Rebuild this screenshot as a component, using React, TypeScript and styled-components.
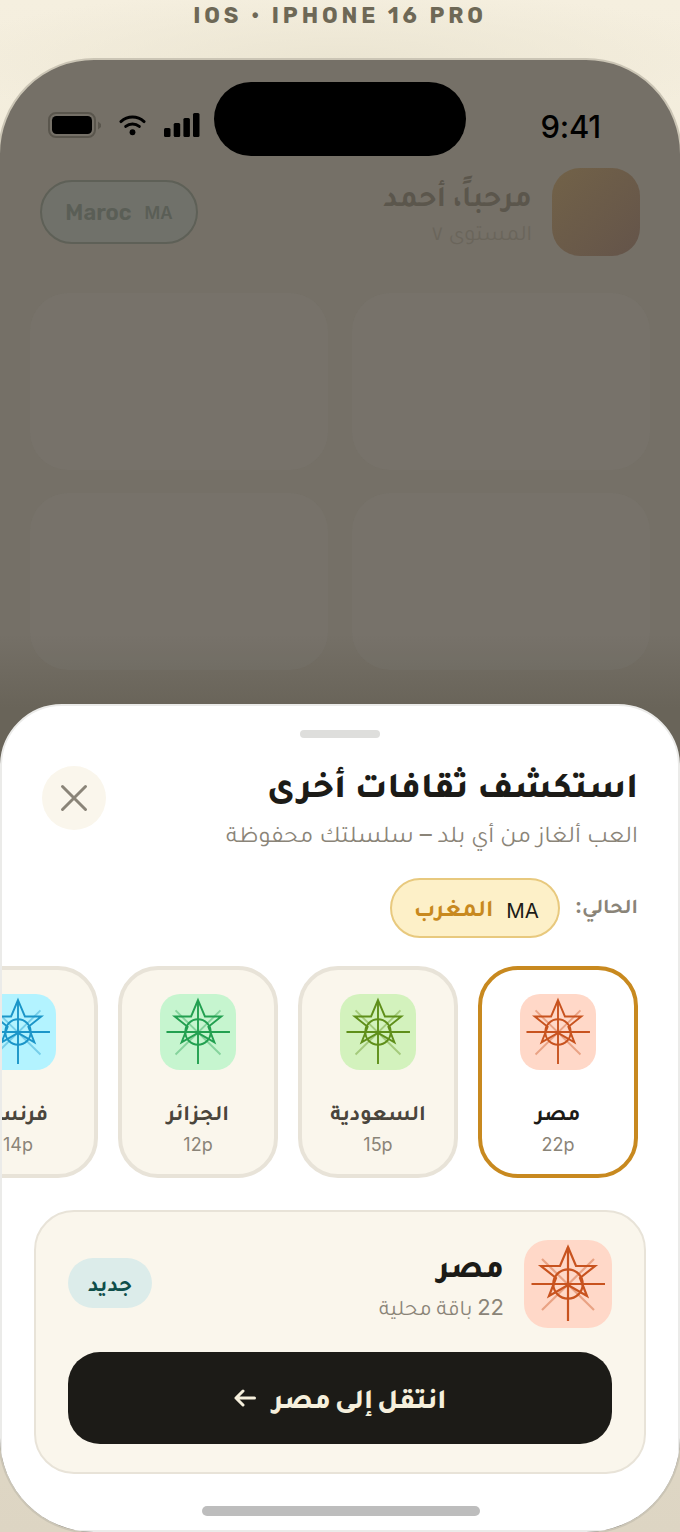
import React from "react";
import styled, { createGlobalStyle } from "styled-components";

const arabic = `Inter, Tajawal, "Noto Kufi Arabic", "DejaVu Sans", sans-serif`;

const Global = createGlobalStyle`
  html, body { margin: 0; padding: 0; height: 1532px; overflow: hidden; }
  * { box-sizing: border-box; }
  body { font-family: ${arabic}; }
`;

const Page = styled.div`
  width: 680px;
  height: 1532px;
  overflow: hidden;
  display: flex;
  flex-direction: column;
  background:
    radial-gradient(ellipse 60% 70px at 50% 60px, #ebe5d2 0%, rgba(235, 229, 210, 0) 100%),
    linear-gradient(180deg, #f5efdf 0%, #ebe4d0 50%, #ddd5c3 100%);
`;
const DeviceLabel = styled.div`
  flex: none;
  height: 58px;
  padding-top: 3px;
  text-align: center;
  font: 700 22px/26px Rubik, Roboto, sans-serif;
  letter-spacing: 3.9px;
  color: #6e6856;
`;
const Phone = styled.div`
  position: relative;
  flex: none;
  width: 684px;
  height: 1476px;
  margin-left: -2px;
  overflow: hidden;
  border: 2px solid #cbc5b5;
  border-radius: 96px;
  background: linear-gradient(180deg, #757067 0%, #757067 39%, #696459 44%, #696459 100%);
`;
const Island = styled.div`
  position: absolute;
  top: 22px;
  left: 214px;
  width: 252px;
  height: 74px;
  border-radius: 37px;
  background: #000;
`;
const StatusBar = styled.div`
  height: 108px;
  padding: 52px 79px 0 48px;
  display: flex;
  align-items: flex-start;
  justify-content: space-between;
`;
const StatusIcons = styled.div`
  display: flex;
  align-items: center;
  gap: 18px;
`;
const Clock = styled.div`
  font: 500 31px/30px Inter, sans-serif;
  color: #000;
  letter-spacing: -0.2px;
`;
const Header = styled.div`
  display: flex;
  align-items: center;
  justify-content: space-between;
  padding: 0 40px;
  height: 88px;
`;
const CountryChip = styled.div`
  width: 158px;
  height: 64px;
  padding-top: 2px;
  border: 2px solid #5e6057;
  border-radius: 32px;
  display: flex;
  align-items: center;
  justify-content: center;
  gap: 13px;
  background: #70716a;
  color: #5a5e56;
  font: 600 22px/24px Rubik, sans-serif;
`;
const ChipCode = styled.span`
  font: 600 17px/24px Inter, sans-serif;
`;
const User = styled.div`
  display: flex;
  align-items: center;
  gap: 20px;
`;
const UserText = styled.div`
  direction: rtl;
  display: flex;
  flex-direction: column;
  gap: 4px;
  padding-bottom: 2px;
`;
const Greeting = styled.div`
  font: 700 30px/38px ${arabic};
  color: #5b564c;
`;
const Level = styled.div`
  font: 400 22px/28px ${arabic};
  color: #6a655b;
`;
const Avatar = styled.div`
  width: 88px;
  height: 88px;
  border-radius: 28px;
  background: linear-gradient(135deg, #726248, #64544a);
`;
const Tiles = styled.div`
  display: grid;
  grid-template-columns: 298px 298px;
  grid-auto-rows: 177px;
  gap: 23px 24px;
  padding: 37px 30px 0;
`;
const Tile = styled.div`
  border-radius: 38px;
  background: rgba(140, 140, 135, 0.1);
`;
const Sheet = styled.div`
  position: absolute;
  left: 0;
  right: 0;
  bottom: 0;
  height: 828px;
  border: 2px solid #ebebe9;
  border-radius: 62px 62px 0 0;
  background: #fff;
  direction: rtl;
  display: flex;
  flex-direction: column;
  overflow: hidden;
`;
const Handle = styled.div`
  width: 80px;
  height: 8px;
  flex: none;
  margin: 24px auto 0;
  border-radius: 4px;
  background: #dededc;
`;
const SheetHead = styled.div`
  display: flex;
  justify-content: space-between;
  align-items: flex-start;
  padding: 28px 40px 0;
`;
const Title = styled.h2`
  margin: 0;
  font: 800 36px/36px ${arabic};
  word-spacing: 1px;
  color: #1c1b17;
`;
const Sub = styled.p`
  margin: 16px 0 0;
  font: 400 24px/32px ${arabic};
  word-spacing: -0.7px;
  color: #8a8478;
`;
const CloseBtn = styled.button`
  width: 64px;
  height: 64px;
  border: 0;
  padding: 0;
  border-radius: 50%;
  background: #faf6ec;
  color: #8a8478;
  display: flex;
  align-items: center;
  justify-content: center;
`;
const CurrentRow = styled.div`
  display: flex;
  align-items: center;
  gap: 15px;
  padding: 28px 40px 0;
`;
const CurrentLabel = styled.span`
  padding-bottom: 4px;
  font: 700 21px/24px ${arabic};
  color: #8a8478;
`;
const CurrentPill = styled.div`
  height: 60px;
  padding: 0 19px 0 22px;
  border: 2px solid #e8c97e;
  border-radius: 30px;
  background: #fdf0c8;
  display: flex;
  align-items: center;
  gap: 13px;
`;
const PillCode = styled.span`
  margin-top: 6px;
  font: 400 20.5px/24px Inter, sans-serif;
  color: #1c1b17;
`;
const PillName = styled.span`
  font: 700 24px/30px ${arabic};
  color: #c8891f;
`;
const Scroller = styled.div`
  display: flex;
  gap: 20px;
  padding: 28px 40px 0;
  overflow: hidden;
`;
const Card = styled.div<{ $active?: boolean }>`
  flex: none;
  width: 160px;
  height: 212px;
  border: 4px solid ${(p) => (p.$active ? "#c8891f" : "#e8e3d8")};
  border-radius: 40px;
  background: ${(p) => (p.$active ? "#fff" : "#faf6ec")};
  display: flex;
  flex-direction: column;
  align-items: center;
  padding-top: 24px;
`;
const IconTile = styled.div<{ $bg: string; $size: number }>`
  flex: none;
  width: ${(p) => p.$size}px;
  height: ${(p) => p.$size}px;
  border-radius: ${(p) => (p.$size > 80 ? 24 : 20)}px;
  background: ${(p) => p.$bg};
  display: flex;
`;
const CardName = styled.div<{ $active?: boolean }>`
  margin-top: 27px;
  font: 700 22px/30px ${arabic};
  white-space: nowrap;
  color: ${(p) => (p.$active ? "#1c1b17" : "#4a453c")};
`;
const CardCount = styled.div`
  margin-top: 7px;
  direction: ltr;
  font: 400 18px/22px Inter, sans-serif;
  color: #8a8478;
`;
const Detail = styled.div`
  margin: 32px 32px 0;
  height: 264px;
  border: 2px solid #e8e3d8;
  border-radius: 40px;
  background: #faf6ec;
  padding: 28px 32px 0;
`;
const DetailTop = styled.div`
  display: flex;
  align-items: center;
  gap: 20px;
`;
const DetailText = styled.div`
  flex: 1;
  display: flex;
  flex-direction: column;
  gap: 6px;
`;
const DetailName = styled.div`
  font: 800 32px/40px ${arabic};
  color: #1c1b17;
`;
const DetailCount = styled.div`
  font: 400 22px/30px ${arabic};
  word-spacing: -1.5px;
  color: #8a8478;
`;
const Badge = styled.span`
  width: 84px;
  height: 50px;
  margin-top: -2px;
  border-radius: 25px;
  background: #dcecea;
  color: #0f4f4a;
  display: flex;
  align-items: center;
  justify-content: center;
  font: 700 22px/28px ${arabic};
`;
const GoBtn = styled.button`
  width: 100%;
  height: 92px;
  margin-top: 24px;
  border: 0;
  border-radius: 32px;
  background: #1c1b17;
  color: #f5efdc;
  font: 800 28px/32px ${arabic};
  word-spacing: -2px;
  direction: rtl;
  display: flex;
  align-items: center;
  justify-content: center;
  gap: 17px;
`;
const HomeBar = styled.div`
  position: absolute;
  left: 200px;
  bottom: 14px;
  width: 278px;
  height: 10px;
  border-radius: 5px;
  background: #bdbdbd;
`;

const Star = ({ color, size }: { color: string; size: number }) => (
  <svg width={size} height={size} viewBox="0 0 88 88" fill="none" stroke={color} strokeWidth="2.2">
    <path d="M18 19 70 70M70 19 18 70" opacity=".4" />
    <path d="M44 7 52 26H71L56 38 63 56 44 45 25 56 32 38 17 26H36Z" />
    <circle cx="44" cy="44" r="14.7" />
    <path d="M7.5 44H81M44 7V81" />
  </svg>
);

const countries = [
  { name: "مصر", count: "22p", bg: "#ffd8c8", color: "#c8531f", active: true },
  { name: "السعودية", count: "15p", bg: "#d3f2bd", color: "#5f8f1a" },
  { name: "الجزائر", count: "12p", bg: "#c6f5cf", color: "#22a050" },
  { name: "فرنسا", count: "14p", bg: "#b3f3ff", color: "#1b95c8" },
];

export default function App() {
  return (
    <Page>
      <Global />
      <DeviceLabel>IOS • IPHONE 16 PRO</DeviceLabel>
      <Phone>
        <StatusBar>
          <StatusIcons>
            <svg width="53" height="26" viewBox="0 0 53 26">
              <rect x="1" y="1" width="46" height="24" rx="7" fill="none" stroke="#5a564d" strokeWidth="2" />
              <rect x="4" y="4" width="40" height="18" rx="4.5" fill="#000" />
              <path d="M50 9.5 53 12v3l-3 2.5z" fill="#5a564d" />
            </svg>
            <svg width="27" height="22" viewBox="0 0 28 22" fill="none" stroke="#000" strokeWidth="3" strokeLinecap="round">
              <path d="M2 7.5C9 1.2 19 1.2 26 7.5M7 12.5c4-3.4 10-3.4 14 0" />
              <circle cx="14" cy="18.5" r="3" fill="#000" stroke="none" />
            </svg>
            <svg width="36" height="24" viewBox="0 0 36 24" fill="#000">
              <rect x="0" y="15" width="6.5" height="9" rx="1.5" />
              <rect x="9.7" y="10" width="6.5" height="14" rx="1.5" />
              <rect x="19.4" y="5" width="6.5" height="19" rx="1.5" />
              <rect x="29" y="0" width="6.5" height="24" rx="1.5" />
            </svg>
          </StatusIcons>
          <Clock>9:41</Clock>
        </StatusBar>
        <Island />
        <Header>
          <CountryChip>
            <span>Maroc</span>
            <ChipCode>MA</ChipCode>
          </CountryChip>
          <User>
            <UserText>
              <Greeting>مرحباً، أحمد</Greeting>
              <Level>المستوى ٧</Level>
            </UserText>
            <Avatar />
          </User>
        </Header>
        <Tiles>
          <Tile />
          <Tile />
          <Tile />
          <Tile />
        </Tiles>
        <Sheet>
          <Handle />
          <SheetHead>
            <div>
              <Title>استكشف ثقافات أخرى</Title>
              <Sub>العب ألغاز من أي بلد – سلسلتك محفوظة</Sub>
            </div>
            <CloseBtn aria-label="إغلاق">
              <svg width="28" height="28" viewBox="0 0 28 28" stroke="currentColor" strokeWidth="3" strokeLinecap="round">
                <path d="M2.5 2.5 25.5 25.5M25.5 2.5 2.5 25.5" />
              </svg>
            </CloseBtn>
          </SheetHead>
          <CurrentRow>
            <CurrentLabel>الحالي:</CurrentLabel>
            <CurrentPill>
              <PillCode>MA</PillCode>
              <PillName>المغرب</PillName>
            </CurrentPill>
          </CurrentRow>
          <Scroller>
            {countries.map((c) => (
              <Card key={c.name} $active={c.active}>
                <IconTile $bg={c.bg} $size={76}>
                  <Star color={c.color} size={76} />
                </IconTile>
                <CardName $active={c.active}>{c.name}</CardName>
                <CardCount>{c.count}</CardCount>
              </Card>
            ))}
          </Scroller>
          <Detail>
            <DetailTop>
              <IconTile $bg="#ffd8c8" $size={88}>
                <Star color="#c8531f" size={88} />
              </IconTile>
              <DetailText>
                <DetailName>مصر</DetailName>
                <DetailCount>22 باقة محلية</DetailCount>
              </DetailText>
              <Badge>جديد</Badge>
            </DetailTop>
            <GoBtn>
              <span>انتقل إلى مصر</span>
              <svg width="22" height="18" viewBox="0 0 22 18" fill="none" stroke="currentColor" strokeWidth="3" strokeLinecap="round" strokeLinejoin="round">
                <path d="M20.5 9H2M9 2 2 9l7 7" />
              </svg>
            </GoBtn>
          </Detail>
          <HomeBar />
        </Sheet>
      </Phone>
    </Page>
  );
}
